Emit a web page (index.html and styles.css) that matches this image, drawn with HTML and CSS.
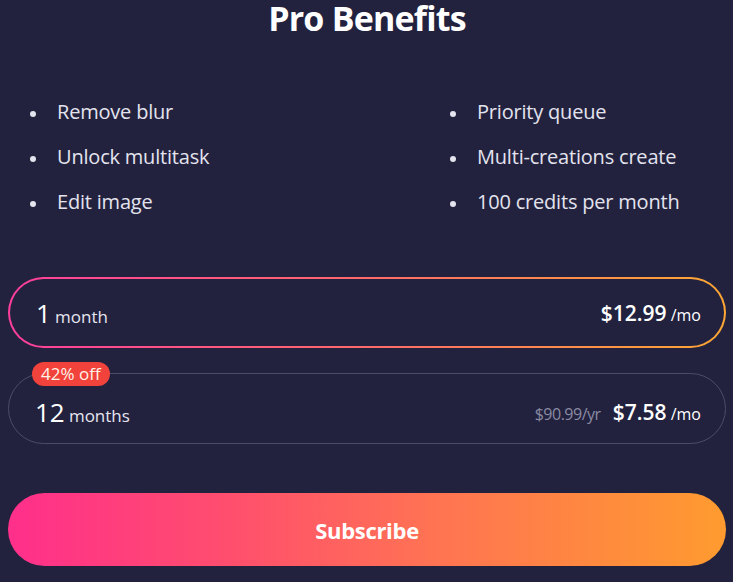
FILE: index.html
```html
<!DOCTYPE html>
<html>
<head>
<meta charset="utf-8">
<link rel="stylesheet" href="styles.css">
</head>
<body>
<div class="page">
  <h1 class="title">Pro Benefits</h1>
  <div class="benefits">
    <ul class="col">
      <li>Remove blur</li>
      <li>Unlock multitask</li>
      <li>Edit image</li>
    </ul>
    <ul class="col">
      <li>Priority queue</li>
      <li>Multi-creations create</li>
      <li>100 credits per month</li>
    </ul>
  </div>
  <div class="plans">
    <div class="plan selected">
      <div class="dur"><span class="num">1</span> <span class="unit">month</span></div>
      <div class="price"><span class="amt">$12.99</span> <span class="per">/mo</span></div>
    </div>
    <div class="plan">
      <span class="badge">42% off</span>
      <div class="dur"><span class="num">12</span> <span class="unit">months</span></div>
      <div class="price"><span class="yr">$90.99/yr</span> <span class="amt">$7.58</span> <span class="per">/mo</span></div>
    </div>
  </div>
  <button class="subscribe">Subscribe</button>
</div>
</body>
</html>
```
FILE: styles.css
```css
html, body {
  margin: 0;
  background: #22223f;
}
body {
  font-family: "Open Sans", "Noto Sans", sans-serif;
  color: #ffffff;
}
.page {
  width: 733px;
  height: 582px;
  box-sizing: border-box;
  padding: 0 7px 0 8px;
  display: flex;
  flex-direction: column;
}
.title {
  margin: 0;
  text-align: center;
  font-size: 34px;
  line-height: 37px;
  font-weight: 700;
  letter-spacing: -0.8px;
}
.benefits {
  display: grid;
  grid-template-columns: 420px 1fr;
  margin-top: 61px;
}
.col {
  list-style: none;
  margin: 0;
  padding: 0 0 0 17px;
  display: flex;
  flex-direction: column;
  gap: 17px;
}
.col li {
  position: relative;
  padding-left: 32px;
  font-size: 20px;
  line-height: 28px;
  color: #e4e4ee;
  letter-spacing: -0.2px;
}
.col li::before {
  content: "";
  position: absolute;
  left: 5px;
  top: 13px;
  width: 6px;
  height: 6px;
  border-radius: 50%;
  background: #e4e4ee;
}
.plans {
  margin-top: 61px;
  display: flex;
  flex-direction: column;
  gap: 25px;
}
.plan {
  position: relative;
  height: 71px;
  box-sizing: border-box;
  border-radius: 36px;
  border: 1px solid #4c4c68;
  display: flex;
  align-items: center;
  justify-content: space-between;
  padding: 6px 24px 0 26px;
}
.plan.selected {
  border: 2px solid transparent;
  background: linear-gradient(#22223f, #22223f) padding-box,
              linear-gradient(90deg, #ff3f9c, #ff6a6a 50%, #ffa833) border-box;
  padding: 0 23px 0 26px;
}
.dur .num {
  font-size: 26px;
  color: #ffffff;
}
.dur .unit {
  font-size: 17px;
  color: #e6e6ef;
}
.price .amt {
  font-size: 21px;
  font-weight: 600;
  color: #ffffff;
}
.price .per {
  font-size: 16px;
  color: #ffffff;
}
.price .yr {
  font-size: 16px;
  color: #8a8aa2;
  letter-spacing: -0.5px;
  margin-right: 8px;
}
.badge {
  position: absolute;
  left: 23px;
  top: -12px;
  background: #f2423c;
  color: #fff3e6;
  font-size: 17px;
  line-height: 24px;
  padding: 0 9px;
  border-radius: 12px;
}
.subscribe {
  margin-top: 49px;
  height: 73px;
  border: none;
  border-radius: 37px;
  background: linear-gradient(90deg, #ff2f8b, #ff4d6e 30%, #ff7452 60%, #ff9b2f);
  color: #ffffff;
  font-family: "Open Sans", "Noto Sans", sans-serif;
  font-size: 22px;
  font-weight: 700;
  letter-spacing: -0.3px;
}
```
